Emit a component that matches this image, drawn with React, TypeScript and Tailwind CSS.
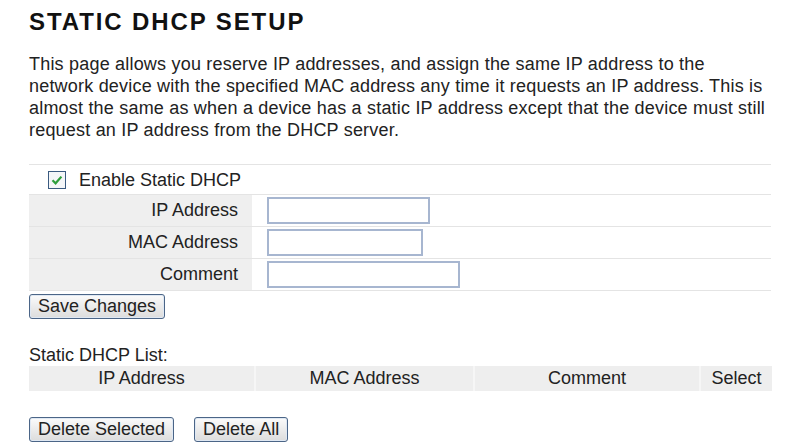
const fields = [
  { label: "IP Address", width: "w-[163px]" },
  { label: "MAC Address", width: "w-[156px]" },
  { label: "Comment", width: "w-[193px]" },
];

const columns = [
  { label: "IP Address", width: "w-[225px]" },
  { label: "MAC Address", width: "w-[219px]" },
  { label: "Comment", width: "w-[226px]" },
  { label: "Select", width: "flex-1" },
];

function Button({ children }: { children: React.ReactNode }) {
  return (
    <button className="rounded-[3px] border border-[#4b6587] bg-gradient-to-b from-[#fbfbfb] to-[#dcdcdc] px-[8px] text-[18px] leading-[23px] text-[#222] shadow-[inset_0_0_0_1px_#dfe8f3]">
      {children}
    </button>
  );
}

export default function App() {
  return (
    <div className="h-[448px] w-[799px] overflow-hidden bg-white pl-[29px] pr-[28px] font-['Liberation_Sans',Arial,sans-serif] text-[#222]">
      <h1 className="mt-[8px] text-[24px] font-bold leading-[28px] tracking-[1.9px] text-[#111]">STATIC DHCP SETUP</h1>

      <p className="mt-[17px] text-[18px] leading-[22px] tracking-[0.2px]">
        This page allows you reserve IP addresses, and assign the same IP address to the network device with the specified
        MAC address any time it requests an IP address. This is almost the same as when a device has a static IP address
        except that the device must still request an IP address from the DHCP server.
      </p>

      <div className="mt-[23px] border-t border-[#e4e4e4]">
        <div className="flex h-[30px] items-center gap-[13px] border-b border-[#e4e4e4] pl-[19px]">
          <svg width="18" height="18" viewBox="0 0 18 18">
            <rect x="0.5" y="0.5" width="17" height="17" fill="#f4f6f8" stroke="#3a5a80" />
            <path d="M4.5 9.2 L7.6 12.3 L13.4 5.6" fill="none" stroke="#2e9e3c" strokeWidth="2.2" />
          </svg>
          <span className="text-[18px] leading-[22px]">Enable Static DHCP</span>
        </div>
        {fields.map((f) => (
          <div key={f.label} className="flex h-[32px] items-center border-b border-[#e4e4e4]">
            <div className="flex h-full w-[223px] items-center justify-end bg-[#efefef] pr-[14px] text-[18px]">
              {f.label}
            </div>
            <div className="pl-[15px]">
              <input className={`${f.width} block h-[27px] border-2 border-[#a7b6d0] bg-white outline-none`} />
            </div>
          </div>
        ))}
      </div>

      <div className="mt-[3px]">
        <Button>Save Changes</Button>
      </div>

      <div className="mt-[25px] text-[18px] leading-[22px]">Static DHCP List:</div>
      <div className="flex h-[25px] w-[743px] bg-[#eeeeee] text-[18px] leading-[25px]">
        {columns.map((c, i) => (
          <div key={c.label} className={`${c.width} text-center ${i > 0 ? "border-l-2 border-[#f6f6f6]" : ""}`}>
            {c.label}
          </div>
        ))}
      </div>

      <div className="mt-[26px] flex gap-[20px]">
        <Button>Delete Selected</Button>
        <Button>Delete All</Button>
      </div>
    </div>
  );
}
